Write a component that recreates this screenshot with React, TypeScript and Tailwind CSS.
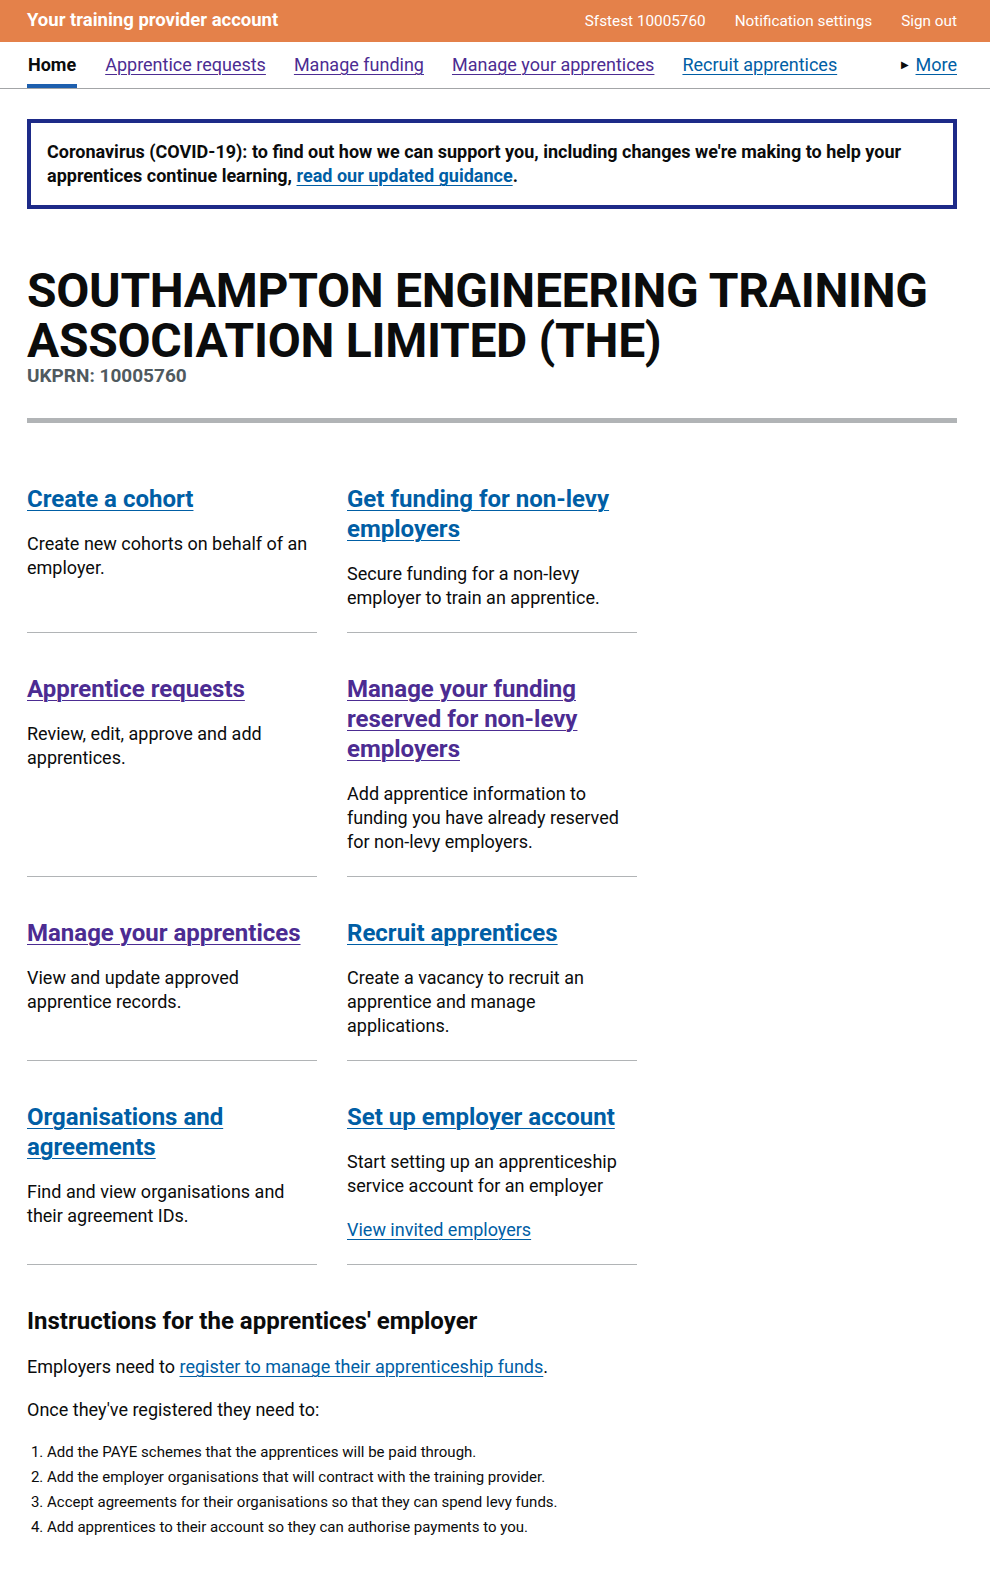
import React from 'react'

interface Card {
  title: string;
  visited: boolean;
  desc: string;
  extra?: string;
}

const cards: Card[] = [
  { title: 'Create a cohort', visited: false, desc: 'Create new cohorts on behalf of an employer.' },
  { title: 'Get funding for non-levy employers', visited: false, desc: 'Secure funding for a non-levy employer to train an apprentice.' },
  { title: 'Apprentice requests', visited: true, desc: 'Review, edit, approve and add apprentices.' },
  { title: 'Manage your funding reserved for non-levy employers', visited: true, desc: 'Add apprentice information to funding you have already reserved for non-levy employers.' },
  { title: 'Manage your apprentices', visited: true, desc: 'View and update approved apprentice records.' },
  { title: 'Recruit apprentices', visited: false, desc: 'Create a vacancy to recruit an apprentice and manage applications.' },
  { title: 'Organisations and agreements', visited: false, desc: 'Find and view organisations and their agreement IDs.' },
  { title: 'Set up employer account', visited: false, desc: 'Start setting up an apprenticeship service account for an employer', extra: 'View invited employers' },
]

const navLinks = [
  { label: 'Apprentice requests', visited: true },
  { label: 'Manage funding', visited: true },
  { label: 'Manage your apprentices', visited: true },
  { label: 'Recruit apprentices', visited: false },
]

const steps = [
  'Add the PAYE schemes that the apprentices will be paid through.',
  'Add the employer organisations that will contract with the training provider.',
  'Accept agreements for their organisations so that they can spend levy funds.',
  'Add apprentices to their account so they can authorise payments to you.',
]

const App = () => {
  return (
    <div className="min-h-[1593px] bg-white text-[#0b0c0c] font-['Roboto','Liberation_Sans',sans-serif]">
      {/* top bar */}
      <header className="h-[42px] bg-[#e4814a] flex items-center justify-between pl-[27px] pr-[33px] text-white">
        <span className="text-[18.5px] font-bold pb-[1px]">Your training provider account</span>
        <div className="flex items-center gap-[29px] text-[15.3px]">
          <span>Sfstest 10005760</span>
          <span>Notification settings</span>
          <span>Sign out</span>
        </div>
      </header>

      {/* nav */}
      <nav className="h-[47px] border-b border-[#a3a5a7] flex items-stretch pl-[27px] pr-[33px] text-[18px]">
        <div className="flex items-stretch gap-[28px]">
          <span className="flex items-center font-bold border-b-4 border-[#1d5fae] pt-[3px] px-[1px]">Home</span>
          {navLinks.map((l) => (
            <a
              key={l.label}
              href="#"
              className={`flex items-center pt-[3px] border-b-4 border-transparent ${l.visited ? 'text-[#4c2c92]' : 'text-[#005ea5]'}`}
            >
              <span className="underline decoration-1 underline-offset-[3px]">{l.label}</span>
            </a>
          ))}
        </div>
        <div className="ml-auto flex items-center gap-[7px] pt-[3px] border-b-4 border-transparent">
          <span className="text-[10px] text-[#0b0c0c]">▶</span>
          <a href="#" className="text-[#005ea5] underline decoration-1 underline-offset-[3px]">More</a>
        </div>
      </nav>

      <main className="pl-[27px] pr-[33px] pb-[52px]">
        {/* covid banner */}
        <div className="mt-[30px] border-4 border-[#1d2a88] px-[16px] py-[17px]">
          <p className="text-[18px] leading-[24px] font-bold">
            Coronavirus (COVID-19): to find out how we can support you, including changes we're making to help your apprentices continue learning,{' '}
            <a href="#" className="text-[#005ea5] underline decoration-1 underline-offset-[3px]">read our updated guidance</a>.
          </p>
        </div>

        {/* heading */}
        <h1 className="mt-[57px] text-[48px] leading-[50px] font-bold tracking-[-0.3px]">
          SOUTHAMPTON ENGINEERING TRAINING ASSOCIATION LIMITED (THE)
        </h1>
        <p className="mt-[2px] text-[19px] leading-[16px] font-bold text-[#505a5f]">UKPRN: 10005760</p>

        <div className="mt-[34px] h-[5px] bg-[#b1b4b6]" />

        {/* cards */}
        <div className="mt-[61px] grid grid-cols-[290px_290px] gap-x-[30px] gap-y-[41px]">
          {cards.map((c) => (
            <div key={c.title} className="flex flex-col border-b border-[#b1b4b6] pb-[22px]">
              <a
                href="#"
                className={`text-[24px] leading-[30px] font-bold underline decoration-1 underline-offset-[3px] ${c.visited ? 'text-[#4c2c92]' : 'text-[#005ea5]'}`}
              >
                {c.title}
              </a>
              <p className="mt-[18px] text-[18px] leading-[24px]">{c.desc}</p>
              {c.extra && (
                <a href="#" className="mt-[20px] text-[18px] leading-[24px] text-[#005ea5] underline decoration-1 underline-offset-[3px]">
                  {c.extra}
                </a>
              )}
            </div>
          ))}
        </div>

        {/* instructions */}
        <h2 className="mt-[41px] text-[24px] leading-[30px] font-bold">Instructions for the apprentices' employer</h2>
        <p className="mt-[19px] text-[18px] leading-[24px]">
          Employers need to{' '}
          <a href="#" className="text-[#005ea5] underline decoration-1 underline-offset-[3px]">register to manage their apprenticeship funds</a>.
        </p>
        <p className="mt-[19px] text-[18px] leading-[24px]">Once they've registered they need to:</p>
        <ol className="mt-[18px] list-decimal pl-5 text-[15px] leading-[25px]">
          {steps.map((s) => (
            <li key={s}>{s}</li>
          ))}
        </ol>
      </main>
    </div>
  )
}

export default App
